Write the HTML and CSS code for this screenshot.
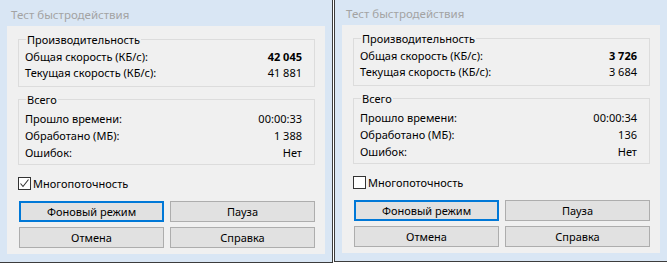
FILE: index.html
```html
<!DOCTYPE html>
<html lang="ru">

<head>
    <meta charset="UTF-8">
    <title>Тест быстродействия</title>
    <link rel="stylesheet" href="styles.css">
</head>

<body>
    <!-- Left dialog: multithreading on -->
    <div class="window">
        <div class="titlebar">Тест быстродействия</div>
        <div class="client">
            <div class="group">
                <div class="legend">Производительность</div>
                <div class="row"><span>Общая скорость (КБ/с):</span><b>42 045</b></div>
                <div class="row"><span>Текущая скорость (КБ/с):</span><span>41 881</span></div>
            </div>
            <div class="group group-total">
                <div class="legend">Всего</div>
                <div class="row"><span>Прошло времени:</span><span>00:00:33</span></div>
                <div class="row"><span>Обработано (МБ):</span><span>1 388</span></div>
                <div class="row"><span>Ошибок:</span><span>Нет</span></div>
            </div>
            <label class="check">
                <span class="box">
                    <svg width="11" height="11" viewBox="0 0 11 11"><polyline points="1.5,5.5 4,8.5 9.5,1.5" fill="none" stroke="#333" stroke-width="1.1"/></svg>
                </span>
                Многопоточность
            </label>
            <div class="buttons">
                <button class="focused">Фоновый режим</button>
                <button>Пауза</button>
                <button>Отмена</button>
                <button>Справка</button>
            </div>
        </div>
    </div>

    <!-- Right dialog: multithreading off -->
    <div class="window window-b">
        <div class="titlebar">Тест быстродействия</div>
        <div class="client">
            <div class="group">
                <div class="legend">Производительность</div>
                <div class="row"><span>Общая скорость (КБ/с):</span><b>3 726</b></div>
                <div class="row"><span>Текущая скорость (КБ/с):</span><span>3 684</span></div>
            </div>
            <div class="group group-total">
                <div class="legend">Всего</div>
                <div class="row"><span>Прошло времени:</span><span>00:00:34</span></div>
                <div class="row"><span>Обработано (МБ):</span><span>136</span></div>
                <div class="row"><span>Ошибок:</span><span>Нет</span></div>
            </div>
            <label class="check">
                <span class="box"></span>
                Многопоточность
            </label>
            <div class="buttons">
                <button class="focused">Фоновый режим</button>
                <button>Пауза</button>
                <button>Отмена</button>
                <button>Справка</button>
            </div>
        </div>
    </div>
</body>

</html>
```

FILE: styles.css
```css
body {
    margin: 0;
    background-color: white;
    font-family: "Noto Sans", "Open Sans", sans-serif;
    font-size: 11px;
    color: black;
    display: flex;
    align-items: flex-start;
    gap: 1px;
}

.window {
    width: 333px;
    box-sizing: border-box;
    background-color: #d9e6f4;
    border-right: 1px solid #3c3c3c;
    border-bottom: 1px solid #3c3c3c;
    padding-bottom: 8px;
}

.window-b {
    flex: 1;
    border-right: none;
    border-left: 1px solid #3c3c3c;
}

.titlebar {
    height: 26px;
    box-sizing: border-box;
    padding: 7px 0 0 11px;
    line-height: 16px;
    font-size: 11.5px;
    color: #a3a3a3;
}

.window-b .titlebar {
    height: 25px;
    padding-top: 6px;
}

.client {
    margin-left: 7px;
    width: 318px;
    height: 228px;
    box-sizing: border-box;
    background-color: #f0f0f0;
    padding: 13px 0 0 11px;
}

/* Group boxes */
.group {
    width: 297px;
    box-sizing: border-box;
    border: 1px solid #dcdcdc;
    padding: 0 12px 5px 6px;
}

.group-total {
    margin-top: 12px;
    padding-bottom: 3px;
}

.legend {
    width: max-content;
    margin: -8px 0 0 1px;
    padding: 0 1px;
    line-height: 16px;
    background-color: #f0f0f0;
}

.row {
    display: flex;
    justify-content: space-between;
    line-height: 16px;
}

.legend + .row {
    margin-top: 1px;
}

.group-total .row {
    line-height: 17px;
}

.group-total .legend + .row {
    margin-top: 2px;
}

.row b {
    font-weight: bold;
}

/* Checkbox */
.check {
    display: flex;
    align-items: center;
    gap: 2px;
    margin-top: 12px;
    height: 13px;
    line-height: 13px;
}

.box {
    width: 13px;
    height: 13px;
    box-sizing: border-box;
    border: 1px solid #333;
    background-color: white;
}

.box svg {
    display: block;
}

/* Buttons */
.buttons {
    display: grid;
    grid-template-columns: 145px 145px;
    column-gap: 6px;
    row-gap: 5px;
    margin: 11px 0 0 1px;
}

.buttons button {
    height: 21px;
    padding: 0;
    font-family: inherit;
    font-size: 11px;
    color: black;
    background-color: #e1e1e1;
    border: 1px solid #adadad;
}

.buttons button.focused {
    border: 2px solid #0078d7;
}
```
